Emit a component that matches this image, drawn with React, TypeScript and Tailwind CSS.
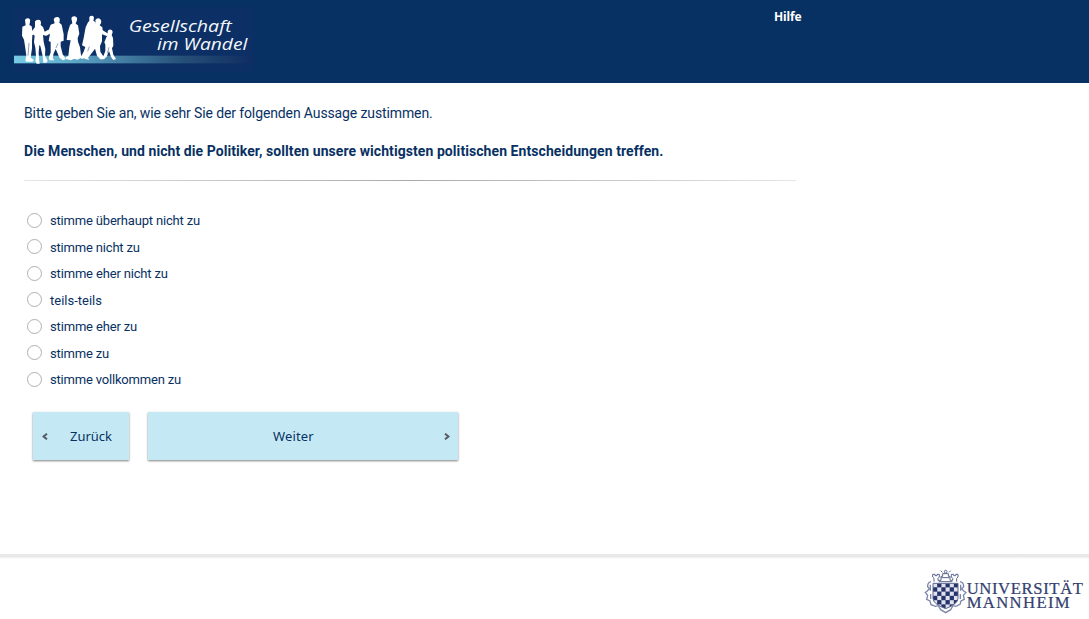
const options = [
  { label: "stimme überhaupt nicht zu", spacing: "tracking-[-0.18px]" },
  { label: "stimme nicht zu", spacing: "tracking-[-0.18px]" },
  { label: "stimme eher nicht zu", spacing: "tracking-[-0.16px]" },
  { label: "teils-teils", spacing: "tracking-[0px]" },
  { label: "stimme eher zu", spacing: "tracking-[-0.16px]" },
  { label: "stimme zu", spacing: "tracking-[-0.18px]" },
  { label: "stimme vollkommen zu", spacing: "tracking-[-0.19px]" },
];

function StudyLogo() {
  return (
    <svg className="block h-[65px] w-60" viewBox="42 22 720 195" aria-label="Gesellschaft im Wandel">
      <defs>
        <linearGradient id="ground" x1="0" x2="1">
          <stop offset="0" stopColor="#76cbe4" />
          <stop offset="0.15" stopColor="#69b9d6" />
          <stop offset="0.42" stopColor="#4884a9" />
          <stop offset="0.7" stopColor="#265078" />
          <stop offset="1" stopColor="#102c61" />
        </linearGradient>
      </defs>
      <rect x="42" y="22" width="720" height="195" fill="#0c2f65" />
      <rect x="42" y="168" width="720" height="23" fill="url(#ground)" />
      <g transform="translate(42 24)" fill="#fff">
        <path d="M33 37Q35 31 43 32Q50 34 48 43L46 52L53 56L55 70L60 68L64 74L55 83L54 102L54 122L50 150L60 157L56 162H36L34 156L37 145L34 122L30 96L24 84L25 57L35 53Z" />
        <path d="M63 41Q68 34 77 37Q83 41 80 52L87 58L92 72L102 67L106 72L96 84L87 82L89 102L94 125L93 144L101 159L97 165H88L86 145L79 115L76 112L74 135L75 155L77 168H68L64 160L66 145L64 120L60 103L62 84L56 80L52 74L63 58Z" />
        <path d="M119 35Q122 27 131 28Q139 30 137 39L136 45L143 51L149 80V99L140 102L140 116L146 140L156 154L147 158L137 151L125 124L119 137L116 151L121 158H107L104 152L110 134L110 103L104 100L108 78L97 84L92 78L105 65L110 51L122 47Z" />
        <path d="M172 32Q174 25 182 26Q191 28 189 37L185 48L192 53L196 78L191 91L192 102L198 119L202 150L190 156L180 153L171 158L156 154L156 148L163 145L166 119L170 98L158 97L161 75L168 52L175 47Z" />
        <path d="M226 28Q231 22 237 25Q242 29 238 39L245 44L248 100L237 115L232 130L213 151L203 154L200 149L209 132L214 118L204 113L209 91L215 59L222 44L226 40Z" />
        <path d="M244 37Q249 29 258 33Q264 39 261 47L257 53L265 59L266 68L283 78L280 86L264 80L264 101L258 115L259 132L270 149L259 155L249 144L243 123L233 137L222 150L226 156L211 154L216 144L228 128L235 108L233 76L236 52L245 47Z" />
        <path d="M281 71Q283 64 291 66Q298 69 295 77L293 82L297 91L298 114L294 122L298 141L306 154L298 157L291 148L285 130L278 147L270 155H257L260 150L268 146L274 130L274 111L271 104L277 89L281 82Z" />
      </g>
      <g transform="translate(42 24)" stroke="#0e2d63" strokeWidth="2" fill="none" opacity=".7">
        <path d="M45 106L42 144M132 107L126 121M226 117L221 131M285 119L280 137" />
      </g>
      <g fill="#f4f7fb" fontFamily="'Open Sans', sans-serif" fontStyle="italic" fontSize="47">
        <text x="386" y="97" textLength="309" lengthAdjust="spacingAndGlyphs">Gesellschaft</text>
        <text x="471" y="151" textLength="271" lengthAdjust="spacingAndGlyphs">im Wandel</text>
      </g>
    </svg>
  );
}

function UniversityLogo() {
  const checks = [0, 1, 2, 3, 4, 5].flatMap((row) =>
    [0, 1, 2, 3, 4, 5].filter((column) => (row + column) % 2 === 1).map((column) => ({ row, column })),
  );
  return (
    <svg className="block h-[52px] w-[167px]" viewBox="0 0 501 156" aria-label="Universität Mannheim">
      <defs>
        <clipPath id="shield">
          <path d="M33 46H108V91Q108 108 71 122Q33 108 33 91Z" />
        </clipPath>
      </defs>
      <g clipPath="url(#shield)" fill="#27346b">
        <rect x="33" y="46" width="75" height="80" fill="#dfe2ec" />
        {checks.map(({ row, column }) => (
          <rect key={`${row}-${column}`} x={33 + column * 12.5} y={45 + row * 12.8} width="12.8" height="13.2" />
        ))}
      </g>
      <g fill="none" stroke="#5b658e" strokeWidth="3">
        <path d="M33 46H108V91Q108 108 71 122Q33 108 33 91Z" />
        <path d="M36 41V31L32 27V19H39V23H45V19H52V27L48 31V37H57V25H62V17H79V25H84V37H92V31L88 27V19H95V23H101V19H108V27L104 31V41M50 41H91M58 29H83" />
        <circle cx="71" cy="11" r="4" />
        <path d="M56 8L61 13M86 8L81 13" />
      </g>
      <g transform="translate(0 -4)" fill="none" stroke="#7c86aa" strokeWidth="4">
        <path d="M27 45Q16 48 17 60L22 66L15 74L10 77L17 86L14 98L24 103L27 114L41 119L49 117L56 129L71 138L86 129L93 117L101 119L114 113L117 103L127 98L124 86L132 77L126 74L119 66L125 60Q126 48 114 45M25 54L25 72M26 82L26 97M116 54V72M115 82V97" />
      </g>
      <g fill="#343f70" stroke="#343f70" strokeWidth=".7" fontFamily="'Liberation Serif', serif" fontSize="50">
        <text x="134" y="77" textLength="349" lengthAdjust="spacing">UNIVERSITÄT</text>
        <text x="134" y="120" textLength="309" lengthAdjust="spacing">MANNHEIM</text>
      </g>
    </svg>
  );
}

function Chevron({ forward = false }: { forward?: boolean }) {
  return (
    <svg className="mt-px h-[7px] w-[6px]" viewBox="0 0 6 7" fill="none" stroke="#555b60" strokeWidth="2">
      <path d={forward ? "M1 .7L4.5 3.5L1 6.3" : "M5 .7L1.5 3.5L5 6.3"} />
    </svg>
  );
}

export default function App() {
  return (
    <div className="flex h-[619px] w-full flex-col overflow-hidden bg-white font-['Roboto',sans-serif] text-[#083163]">
      <header className="flex h-[83px] shrink-0 items-start bg-[#083163] pl-[14px]">
        <div className="pt-[7px]">
          <StudyLogo />
        </div>
        <a href="#" className="ml-[520px] pt-[7px] font-['Noto_Sans',sans-serif] text-[12px] leading-5 font-bold tracking-[-0.1px] text-white">Hilfe</a>
      </header>
      <main className="flex h-[471px] shrink-0 flex-col pl-6">
        <p className="mt-5 h-5 text-[14px] leading-5 whitespace-nowrap tracking-[-0.12px]">Bitte geben Sie an, wie sehr Sie der folgenden Aussage zustimmen.</p>
        <p className="mt-[18px] h-5 text-[14px] leading-5 font-bold whitespace-nowrap tracking-[0.07px]">Die Menschen, und nicht die Politiker, sollten unsere wichtigsten politischen Entscheidungen treffen.</p>
        <div className="mt-[19px] h-px w-[772px] bg-linear-to-r from-[#e6e6e6] via-[#aaa] to-[#e6e6e6]" />
        <fieldset className="mt-[26px] flex flex-col">
          {options.map(({ label, spacing }) => (
            <label key={label} className="flex h-[26.5px] items-center gap-2 pl-[3px]">
              <input type="radio" name="agreement" className="m-0 size-[15px] shrink-0 appearance-none rounded-full border border-[#b0b0b0] bg-white" />
              <span className={`pt-[2px] text-[13px] leading-5 whitespace-nowrap ${spacing}`}>{label}</span>
            </label>
          ))}
        </fieldset>
        <div className="mt-[19px] flex gap-[19px] pl-[9px] font-['Noto_Sans',sans-serif] text-[13px]">
          <button className="flex h-12 w-24 items-center bg-[#c5e9f4] pl-[9px] shadow-[0_1px_2px_rgba(0,0,0,0.5)]">
            <Chevron />
            <span className="ml-[22px] pt-[2px]">Zurück</span>
          </button>
          <button className="flex h-12 w-[310px] items-center justify-between bg-[#c5e9f4] pr-[8px] pl-[125px] shadow-[0_1px_2px_rgba(0,0,0,0.5)]">
            <span className="pt-[2px] tracking-[0.15px]">Weiter</span>
            <Chevron forward />
          </button>
        </div>
      </main>
      <footer className="flex grow flex-col">
        <div className="h-[5px] bg-linear-to-b from-[#e8e8e8] via-[#e9e9e9] to-white" />
        <div className="flex justify-end pt-[9px]">
          <UniversityLogo />
        </div>
      </footer>
    </div>
  );
}
